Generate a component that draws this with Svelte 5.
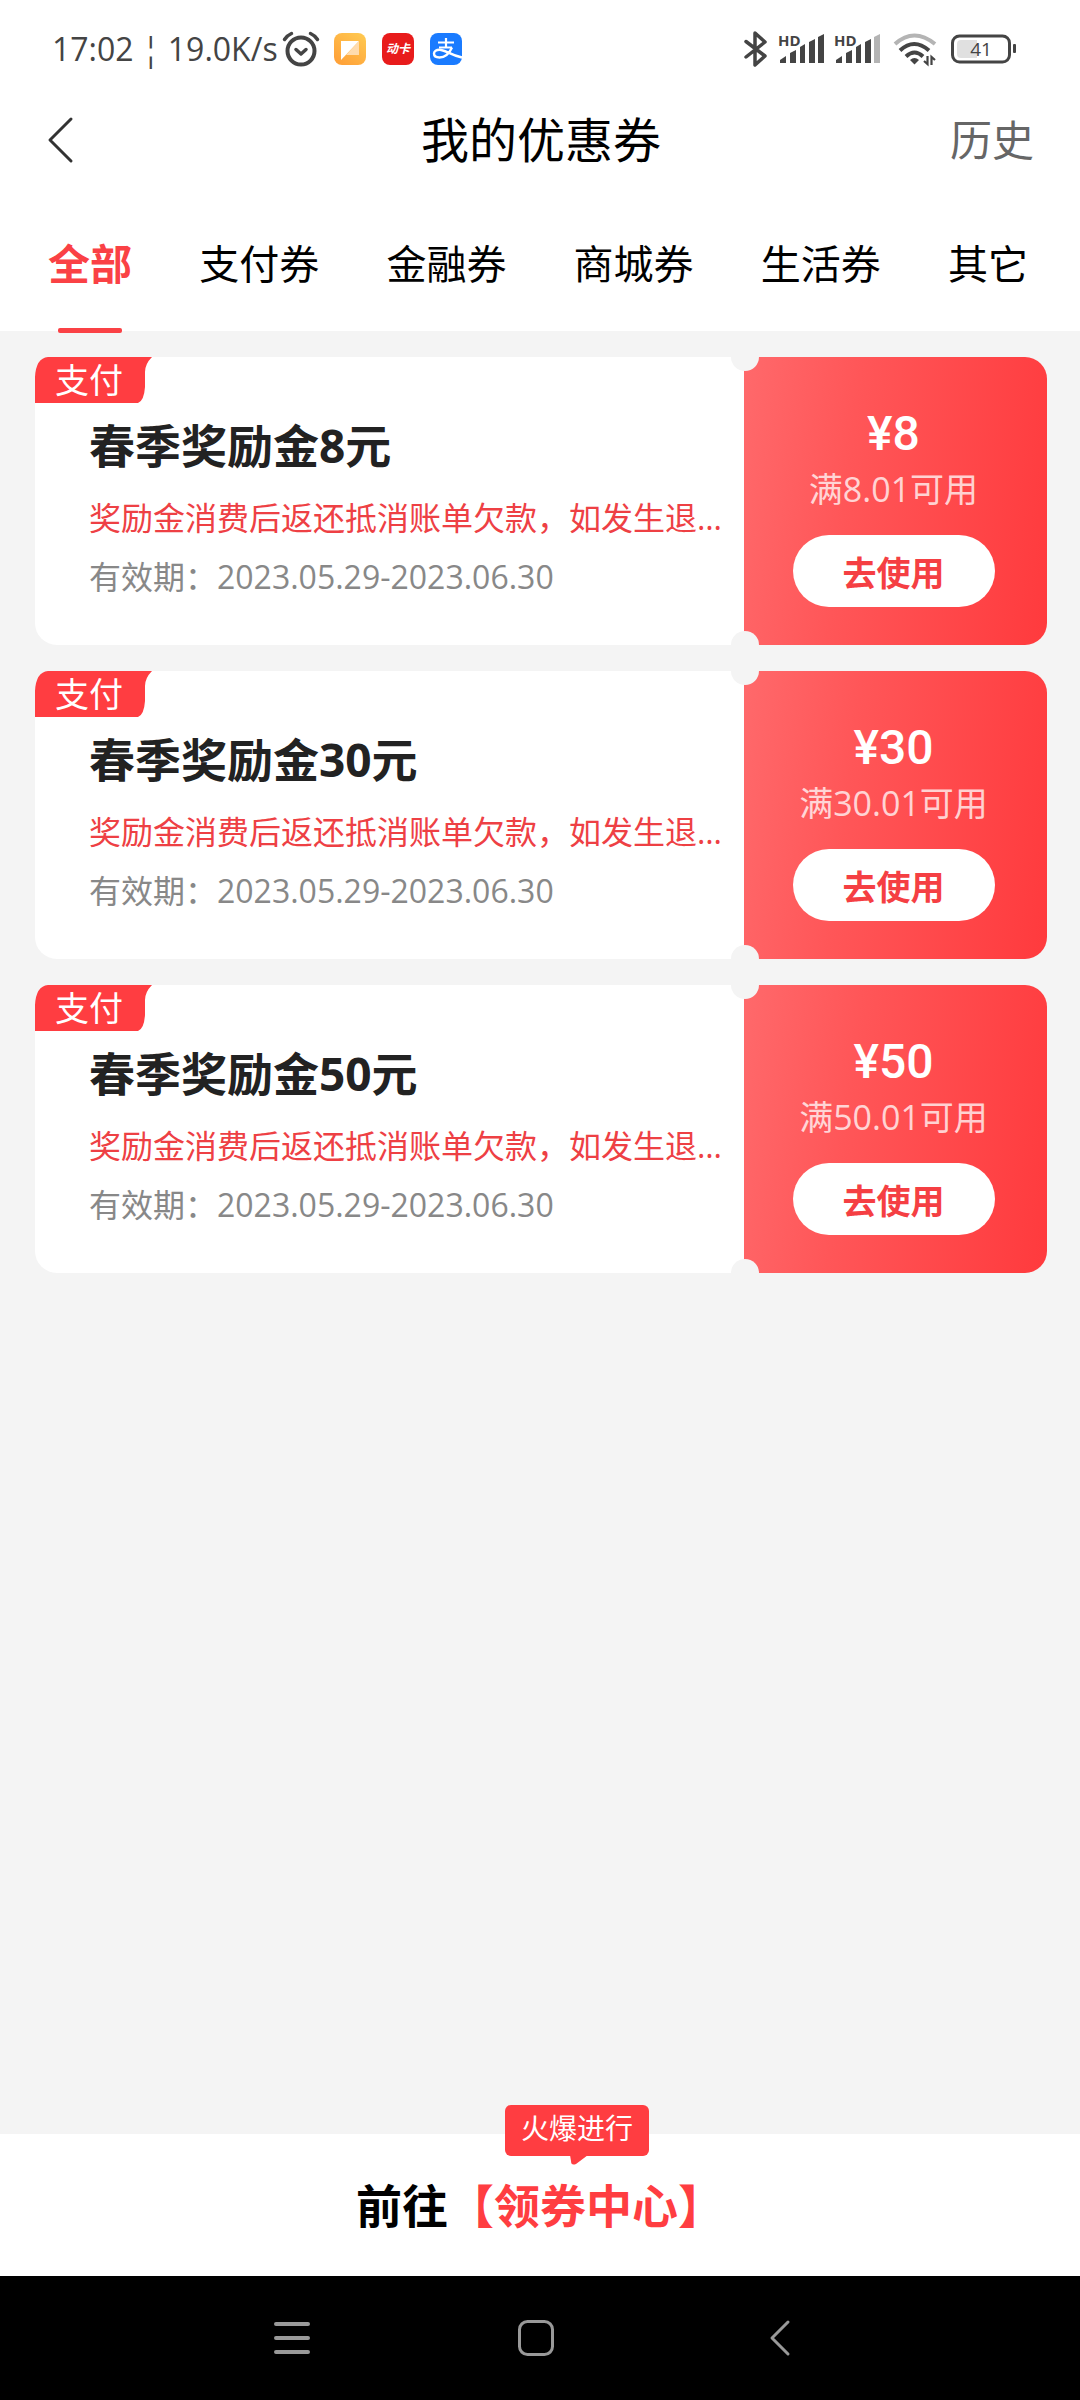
<script>
  let tabs = ['全部', '支付券', '金融券', '商城券', '生活券', '其它'];
  let activeTab = '全部';

  const desc = '奖励金消费后返还抵消账单欠款，如发生退款，奖励金不予退还';
  const period = '2023.05.29-2023.06.30';

  let coupons = [
    { amount: 8, limit: '8.01', desc, period },
    { amount: 30, limit: '30.01', desc, period },
    { amount: 50, limit: '50.01', desc, period }
  ];

  // the second SIM has its last signal bar greyed out
  let signals = [5, 4];
</script>

<div class="page">
  <div class="status">
    <div class="status-left">
      <span class="clock">17:02 ¦ 19.0K/s</span>
      <svg class="alarm" width="38" height="36" viewBox="0 0 38 36" fill="none" stroke="#444" stroke-linecap="round">
        <circle cx="19" cy="20" r="13.5" stroke-width="4" />
        <path d="M2.5 8.5Q5 4.500 9.500 2.500M28.500 2.500Q33 4.500 35.500 8.500" stroke-width="3.500" />
        <path d="M14 18.500l5 4.500 5-4.500" stroke-width="3.500" stroke-linejoin="round" />
      </svg>
      <svg width="32" height="32" viewBox="0 0 32 32">
        <defs>
          <linearGradient id="noteBg" x1="1" y1="0" x2="0.300" y2="1">
            <stop offset="0" stop-color="#ffcb52" />
            <stop offset="1" stop-color="#ffa239" />
          </linearGradient>
        </defs>
        <rect width="32" height="32" rx="8" fill="url(#noteBg)" />
        <path d="M7 8h18L7 27z" fill="#fff" />
        <path d="M25 8v14H12z" fill="#ffdcae" />
      </svg>
      <svg width="32" height="32" viewBox="0 0 32 32">
        <rect width="32" height="32" rx="8" fill="#e81b1b" />
        <text x="16" y="20" text-anchor="middle" class="app-name">动卡</text>
      </svg>
      <svg width="32" height="32" viewBox="0 0 32 32" fill="none" stroke="#fff">
        <rect width="32" height="32" rx="8" fill="#1a7bff" stroke="none" />
        <path d="M8 9.500h16M16 5v9M9 14.500h13" stroke-width="2.200" />
        <path d="M22 14.500C19 21 14 24.500 9.500 24.500 5.500 24.500 4 22.500 4 20.500c0-2.500 2.500-3.800 5.500-3.800C15 16.700 20 22 32 24.500" stroke-width="2.400" />
      </svg>
    </div>

    <div class="status-right">
      <svg class="bluetooth" width="24" height="36" viewBox="0 0 24 36" fill="none" stroke="#444" stroke-width="3.500" stroke-linejoin="round" stroke-linecap="round">
        <path d="M2 10.500l19 14.500-10 9V2l10 9L2 26" />
      </svg>
      {#each signals as level}
        <svg class="signal" width="48" height="32" viewBox="0 0 48 32" fill="#444">
          <text x="0" y="13" class="hd">HD</text>
          <path d="M2 27l6-4v7H2z" />
          <path d="M12 20l6-3v13h-6z" />
          <path d="M22 14l5-3v19h-5z" />
          <path d="M31 9l6-3v24h-6z" />
          <path d="M40 4l6-3v29h-6z" fill={level > 4 ? '#444' : '#b4b4b4'} />
        </svg>
      {/each}
      <svg class="wifi" width="44" height="34" viewBox="0 0 44 34" fill="none" stroke="#444" stroke-width="4">
        <path d="M2 12Q21-5 42 12" stroke="#b4b4b4" />
        <path d="M7 18.500Q21 5.500 36 18.500" />
        <path d="M13 24.500q8.500-8 17 0" />
        <path d="M17 28q4.500-4 9 0l-4.500 4.500z" fill="#444" stroke="none" />
        <path d="M34.500 24v8l-3.500-3M38.500 33v-8l3.500 3" stroke-width="2.200" />
      </svg>
      <svg width="66" height="30" viewBox="0 0 66 30">
        <rect x="1.500" y="2" width="57" height="26" rx="7" fill="none" stroke="#444" stroke-width="3" />
        <path d="M10 6h16v18H10a4 4 0 0 1-4-4V10a4 4 0 0 1 4-4z" fill="#e0e0e0" />
        <rect x="62" y="10" width="3" height="9" rx="1" fill="#444" />
        <text x="30" y="22" text-anchor="middle" class="level">41</text>
      </svg>
    </div>
  </div>

  <header>
    <button class="back" aria-label="返回">
      <svg width="26" height="46" viewBox="0 0 26 46" fill="none" stroke="#333" stroke-width="3" stroke-linecap="round" stroke-linejoin="round">
        <path d="M23 2L2 23l21 21" />
      </svg>
    </button>
    <h1>我的优惠券</h1>
    <a class="history" href="#history">历史</a>
  </header>

  <nav class="tabs">
    {#each tabs as tab}
      <button class:active={tab === activeTab} on:click={() => (activeTab = tab)}>{tab}</button>
    {/each}
  </nav>

  <main>
    {#each coupons as coupon}
      <article class="coupon">
        <div class="info">
          <h2>春季奖励金{coupon.amount}元</h2>
          <p class="desc">{coupon.desc}</p>
          <p class="period">有效期：{coupon.period}</p>
        </div>
        <div class="value">
          <strong>¥{coupon.amount}</strong>
          <span class="limit">满{coupon.limit}可用</span>
          <button class="use">去使用</button>
        </div>
        <div class="tag">
          <svg width="118" height="46" viewBox="0 0 118 46">
            <path d="M0 46V20Q1 1 13 0h104q-7 7-7 15v15q-1 14-7 16z" fill="#ff3d41" />
          </svg>
          <span>支付</span>
        </div>
      </article>
    {/each}
  </main>

  <footer>
    <a class="center-link" href="#center">
      前往<span class="red">【领券中心】</span>
      <span class="bubble">
        火爆进行
        <svg width="18" height="10" viewBox="0 0 18 10"><path d="M0 0h18L6 9Q1 11 1 6z" fill="#ff3d41" /></svg>
      </span>
    </a>
  </footer>

  <div class="navbar">
    <button aria-label="菜单">
      <svg width="36" height="36" viewBox="0 0 36 36" stroke="#999" stroke-width="4" stroke-linecap="round">
        <path d="M2 4h32M2 18h32M2 32h32" />
      </svg>
    </button>
    <button aria-label="主页">
      <svg width="36" height="36" viewBox="0 0 36 36" fill="none" stroke="#999" stroke-width="3">
        <rect x="1.500" y="1.500" width="33" height="33" rx="8" />
      </svg>
    </button>
    <button aria-label="返回">
      <svg width="36" height="36" viewBox="0 0 36 36" fill="none" stroke="#999" stroke-width="3" stroke-linecap="round" stroke-linejoin="round">
        <path d="M26 2L10 18l16 16" />
      </svg>
    </button>
  </div>
</div>

<style>
  :global(body) {
    margin: 0;
    background: #f4f4f4;
  }

  .page {
    min-height: 100vh;
    display: flex;
    flex-direction: column;
    font-family: "Open Sans", "Noto Sans CJK SC", sans-serif;
    color: #000;
  }

  button {
    border: none;
    padding: 0;
    background: none;
    font-family: inherit;
    color: inherit;
    cursor: pointer;
  }

  a {
    color: inherit;
    text-decoration: none;
  }

  svg {
    display: block;
    flex: none;
    overflow: visible;
  }

  h1, h2, p {
    margin: 0;
  }

  .status {
    height: 98px;
    padding: 0 63px 0 52px;
    display: flex;
    justify-content: space-between;
    align-items: center;
    background: #fff;
    color: #444;
  }

  .status-left, .status-right {
    display: flex;
    align-items: center;
  }

  .status-left {
    gap: 16px;
  }

  .clock {
    font-size: 32px;
    line-height: 44px;
    white-space: pre;
  }

  .alarm {
    margin-left: -12px;
    margin-right: -2px;
  }

  .app-name {
    font-size: 12px;
    font-weight: 700;
    font-style: italic;
    fill: #fff;
  }

  .bluetooth {
    margin-right: 10px;
  }

  .signal {
    margin-right: 8px;
  }

  .hd {
    font-size: 15px;
    font-weight: 700;
  }

  .wifi {
    margin: 0 14px 0 3px;
  }

  .level {
    font-size: 19px;
    fill: #444;
  }

  header {
    height: 84px;
    padding: 0 46px 0 48px;
    display: grid;
    grid-template-columns: 1fr auto 1fr;
    align-items: center;
    background: #fff;
  }

  .back {
    justify-self: start;
  }

  h1 {
    font-size: 48px;
    line-height: 60px;
    font-weight: 400;
  }

  .history {
    justify-self: end;
    font-size: 42px;
    line-height: 60px;
    color: #666;
  }

  .tabs {
    padding: 52px 52px 37px 48px;
    display: flex;
    justify-content: space-between;
    background: #fff;
  }

  .tabs button {
    font-size: 40px;
    line-height: 60px;
  }

  .tabs .active {
    position: relative;
    font-size: 42px;
    font-weight: 700;
    color: #fa4145;
  }

  .tabs .active::after {
    content: "";
    position: absolute;
    left: 10px;
    right: 10px;
    bottom: -39px;
    height: 5px;
    border-radius: 2px;
    background: #fa4145;
  }

  main {
    flex: 1;
    padding: 26px 33px 26px 35px;
    display: flex;
    flex-direction: column;
    gap: 26px;
  }

  .coupon {
    position: relative;
    display: flex;
  }

  .info {
    flex: 1;
    min-width: 0;
    padding: 58px 18px 46px 54px;
    background: #fff;
    border-radius: 22px 0 0 22px;
  }

  h2 {
    font-size: 46px;
    line-height: 60px;
    font-weight: 700;
    color: #222;
  }

  .desc, .period {
    font-size: 32px;
    line-height: 44px;
  }

  .desc {
    margin: 21px 0 15px;
    overflow: hidden;
    white-space: nowrap;
    text-overflow: ellipsis;
    color: #ee4044;
  }

  .period {
    color: #888;
  }

  .value {
    position: relative;
    width: 303px;
    padding: 51px 4px 38px 0;
    box-sizing: border-box;
    display: flex;
    flex-direction: column;
    align-items: center;
    background: linear-gradient(97deg, #ff696b, #ff5658 35%, #ff3a3d);
    border-radius: 0 22px 22px 0;
    color: #fff;
  }

  /* punched holes on the tear line */
  .value::before, .value::after {
    content: "";
    position: absolute;
    left: -13px;
    width: 28px;
    height: 14px;
    background: #f4f4f4;
  }

  .value::before {
    top: 0;
    border-radius: 0 0 14px 14px;
  }

  .value::after {
    bottom: 0;
    border-radius: 14px 14px 0 0;
  }

  strong {
    font-family: Roboto, "Noto Sans CJK SC", sans-serif;
    font-size: 48px;
    line-height: 52px;
    font-weight: 500;
  }

  .limit {
    margin: 7px 0 24px;
    font-size: 34px;
    line-height: 44px;
    color: rgba(255, 255, 255, 0.75);
  }

  .use {
    width: 202px;
    height: 72px;
    border-radius: 36px;
    background: #fff;
    font-size: 34px;
    font-weight: 700;
    color: #f53f43;
  }

  .tag {
    position: absolute;
    top: 0;
    left: 0;
    display: grid;
    color: #fff;
    font-size: 34px;
    line-height: 46px;
  }

  .tag svg, .tag span {
    grid-area: 1 / 1;
  }

  .tag span {
    padding-left: 20px;
  }

  footer {
    padding: 40px 0;
    background: #fff;
    text-align: center;
  }

  .center-link {
    position: relative;
    display: inline-block;
    font-size: 46px;
    line-height: 62px;
    font-weight: 700;
    vertical-align: top;
  }

  .red {
    color: #ff3d41;
  }

  .bubble {
    position: absolute;
    top: -69px;
    left: 149px;
    width: 144px;
    height: 51px;
    border-radius: 6px;
    background: #ff3d41;
    color: #fff;
    font-size: 28px;
    line-height: 46px;
    font-weight: 400;
  }

  .bubble svg {
    position: absolute;
    top: 50px;
    left: 65px;
  }

  .navbar {
    height: 124px;
    padding-right: 9px;
    display: flex;
    justify-content: center;
    align-items: center;
    gap: 208px;
    background: #000;
  }
</style>
